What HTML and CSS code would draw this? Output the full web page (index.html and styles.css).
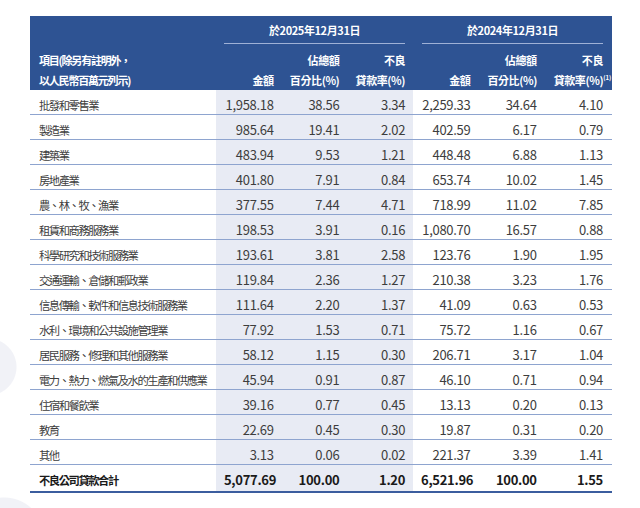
FILE: index.html
```html
<!DOCTYPE html>
<html lang="zh-Hant">
<head>
<meta charset="utf-8">
<title>不良公司貸款</title>
<link rel="stylesheet" href="styles.css">
</head>
<body>
<table class="npl">
  <colgroup>
    <col class="c-label">
    <col class="c-num"><col class="c-num"><col class="c-num">
    <col class="c-num2"><col class="c-num2"><col class="c-num2">
  </colgroup>
  <thead>
    <tr class="h1">
      <th class="lab" rowspan="2">項目(除另有註明外，<br>以人民幣百萬元列示)</th>
      <th colspan="3" class="date"><div class="date-in">於2025年12月31日</div></th>
      <th colspan="3" class="date d2"><div class="date-in">於2024年12月31日</div></th>
    </tr>
    <tr class="h2">
      <th>金額</th>
      <th>佔總額<br>百分比(%)</th>
      <th>不良<br>貸款率(%)</th>
      <th>金額</th>
      <th>佔總額<br>百分比(%)</th>
      <th>不良<br>貸款率(%)<sup>(1)</sup></th>
    </tr>
  </thead>
  <tbody>
    <tr><td>批發和零售業</td><td class="s">1,958.18</td><td class="s">38.56</td><td class="s">3.34</td><td>2,259.33</td><td>34.64</td><td>4.10</td></tr>
    <tr><td>製造業</td><td class="s">985.64</td><td class="s">19.41</td><td class="s">2.02</td><td>402.59</td><td>6.17</td><td>0.79</td></tr>
    <tr><td>建築業</td><td class="s">483.94</td><td class="s">9.53</td><td class="s">1.21</td><td>448.48</td><td>6.88</td><td>1.13</td></tr>
    <tr><td>房地產業</td><td class="s">401.80</td><td class="s">7.91</td><td class="s">0.84</td><td>653.74</td><td>10.02</td><td>1.45</td></tr>
    <tr><td>農、林、牧、漁業</td><td class="s">377.55</td><td class="s">7.44</td><td class="s">4.71</td><td>718.99</td><td>11.02</td><td>7.85</td></tr>
    <tr><td>租賃和商務服務業</td><td class="s">198.53</td><td class="s">3.91</td><td class="s">0.16</td><td>1,080.70</td><td>16.57</td><td>0.88</td></tr>
    <tr><td>科學研究和技術服務業</td><td class="s">193.61</td><td class="s">3.81</td><td class="s">2.58</td><td>123.76</td><td>1.90</td><td>1.95</td></tr>
    <tr><td>交通運輸、倉儲和郵政業</td><td class="s">119.84</td><td class="s">2.36</td><td class="s">1.27</td><td>210.38</td><td>3.23</td><td>1.76</td></tr>
    <tr><td>信息傳輸、軟件和信息技術服務業</td><td class="s">111.64</td><td class="s">2.20</td><td class="s">1.37</td><td>41.09</td><td>0.63</td><td>0.53</td></tr>
    <tr><td>水利、環境和公共設施管理業</td><td class="s">77.92</td><td class="s">1.53</td><td class="s">0.71</td><td>75.72</td><td>1.16</td><td>0.67</td></tr>
    <tr><td>居民服務、修理和其他服務業</td><td class="s">58.12</td><td class="s">1.15</td><td class="s">0.30</td><td>206.71</td><td>3.17</td><td>1.04</td></tr>
    <tr><td>電力、熱力、燃氣及水的生產和供應業</td><td class="s">45.94</td><td class="s">0.91</td><td class="s">0.87</td><td>46.10</td><td>0.71</td><td>0.94</td></tr>
    <tr><td>住宿和餐飲業</td><td class="s">39.16</td><td class="s">0.77</td><td class="s">0.45</td><td>13.13</td><td>0.20</td><td>0.13</td></tr>
    <tr><td>教育</td><td class="s">22.69</td><td class="s">0.45</td><td class="s">0.30</td><td>19.87</td><td>0.31</td><td>0.20</td></tr>
    <tr><td>其他</td><td class="s">3.13</td><td class="s">0.06</td><td class="s">0.02</td><td>221.37</td><td>3.39</td><td>1.41</td></tr>
    <tr class="total"><td>不良公司貸款合計</td><td class="s">5,077.69</td><td class="s">100.00</td><td class="s">1.20</td><td>6,521.96</td><td>100.00</td><td>1.55</td></tr>
  </tbody>
</table>
</body>
</html>
```

FILE: styles.css
```css
html, body {
  margin: 0;
  padding: 0;
}
body {
  width: 640px;
  height: 508px;
  overflow: hidden;
  background:
    radial-gradient(circle at -12px 367px, #f1f2f7 28px, rgba(255,255,255,0) 29px),
    radial-gradient(circle at 4px 538px, #f1f2f7 40px, rgba(255,255,255,0) 41px),
    #ffffff;
  font-family: "Noto Sans CJK TC", "Noto Sans", sans-serif;
  color: #3a3a3a;
}
.npl {
  margin: 16px 0 0 30px;
  width: 582px;
  border-collapse: collapse;
  table-layout: fixed;
}
.c-label { width: 186px; }
.c-num { width: 65.7px; }
.c-num2 { width: 66.3px; }

thead th {
  background: #2e5393;
  color: #ffffff;
  font-weight: bold;
  font-size: 11px;
  padding: 0 8px;
  text-align: right;
  vertical-align: bottom;
  line-height: 20px;
  white-space: nowrap;
}
thead th.lab {
  text-align: left;
  padding-left: 9px;
  font-size: 11px;
  letter-spacing: -1.2px;
}
.h1 th.date {
  text-align: center;
  padding: 0 8px;
  height: 28px;
  vertical-align: top;
}
.h1 th.d2 { padding: 0 9px; }
.date-in {
  height: 27px;
  line-height: 29px;
  border-bottom: 1px solid #9fb1d6;
  font-size: 11px;
  letter-spacing: -0.4px;
}
.h2 th {
  height: 40px;
  padding-top: 6px;
  padding-bottom: 0;
  letter-spacing: -0.4px;
}
.h2 th:nth-child(n+4) { padding-right: 9px; }
.h2 sup {
  font-size: 6px;
  line-height: 0;
  vertical-align: 5px;
  letter-spacing: 0;
}

tbody td {
  height: 23px;
  padding: 0 8px 1px 8px;
  border-bottom: 1px solid #8ea4cf;
  font-size: 13px;
  line-height: 16px;
  text-align: right;
  vertical-align: bottom;
  white-space: nowrap;
  color: #3d3d3d;
  letter-spacing: -0.3px;
}
tbody td:nth-child(n+5) { padding-right: 9px; }
tbody td:first-child {
  text-align: left;
  padding-left: 9px;
  font-size: 11.3px;
  letter-spacing: -1.45px;
}
tbody td.s { background: #e8ebf4; }
tbody tr.total td {
  height: 23px;
  border-bottom: 2px solid #3b5d9e;
  font-weight: bold;
  color: #1a1a1a;
  padding-bottom: 3px;
}
```
